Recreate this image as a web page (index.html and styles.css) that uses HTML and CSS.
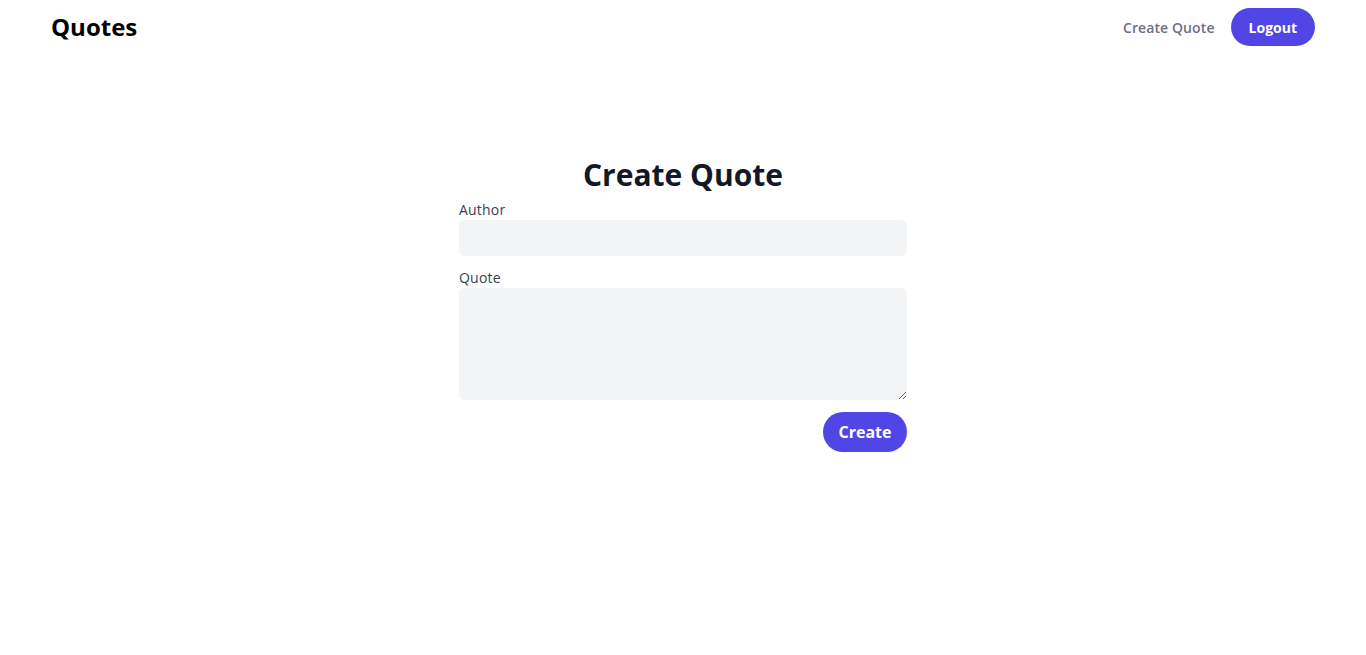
FILE: index.html
```html
<!DOCTYPE html>
<html lang="en">
<head>
<meta charset="utf-8">
<title>Quotes</title>
<link rel="stylesheet" href="styles.css">
</head>
<body>
<header class="nav">
  <a class="brand" href="#">Quotes</a>
  <nav class="nav-links">
    <a class="nav-link" href="#">Create Quote</a>
    <button class="btn btn-sm" type="button">Logout</button>
  </nav>
</header>
<main class="main">
  <form class="form">
    <h1 class="title">Create Quote</h1>
    <label class="label" for="author">Author</label>
    <input class="input" id="author" type="text">
    <label class="label label-gap" for="quote">Quote</label>
    <textarea class="input textarea" id="quote"></textarea>
    <div class="actions">
      <button class="btn btn-md" type="submit">Create</button>
    </div>
  </form>
</main>
</body>
</html>
```
FILE: styles.css
```css
* { box-sizing: border-box; }
html, body { margin: 0; padding: 0; }
body {
  font-family: "Open Sans", "Noto Sans", sans-serif;
  background: #ffffff;
  color: #111827;
}
.nav {
  display: flex;
  justify-content: space-between;
  align-items: center;
  padding: 8px 51px 0 51px;
  height: 38px;
  box-sizing: content-box;
}
.brand {
  font-size: 24px;
  font-weight: 700;
  color: #000;
  text-decoration: none;
  line-height: 32px;
}
.nav-links {
  display: flex;
  align-items: center;
  gap: 16px;
}
.nav-link {
  font-size: 14px;
  font-weight: 600;
  letter-spacing: 0.1px;
  color: #6b7280;
  text-decoration: none;
}
.btn {
  font-family: inherit;
  background: #4f46e5;
  color: #fff;
  border: 0;
  border-radius: 9999px;
  cursor: pointer;
}
.btn-sm {
  height: 38px;
  padding: 0 18px;
  font-size: 14px;
  font-weight: 700;
}
.btn-md {
  height: 40px;
  padding: 0 15.5px;
  font-size: 16px;
  font-weight: 700;
}
.main {
  display: flex;
  justify-content: center;
  padding-top: 111px;
}
.form {
  width: 448px;
  display: flex;
  flex-direction: column;
}
.title {
  margin: 0 0 7px 0;
  font-size: 30px;
  line-height: 36px;
  font-weight: 700;
  text-align: center;
  color: #111827;
}
.label {
  font-size: 14px;
  line-height: 20px;
  letter-spacing: 0.2px;
  color: #374151;
}
.label-gap { margin-top: 12px; }
.input {
  display: block;
  width: 100%;
  height: 36px;
  border: 0;
  border-radius: 6px;
  background: #f3f4f6;
  font-family: inherit;
  font-size: 14px;
  padding: 8px 12px;
}
.textarea {
  height: 112px;
  resize: vertical;
}
.actions {
  display: flex;
  justify-content: flex-end;
  margin-top: 12px;
}
```
